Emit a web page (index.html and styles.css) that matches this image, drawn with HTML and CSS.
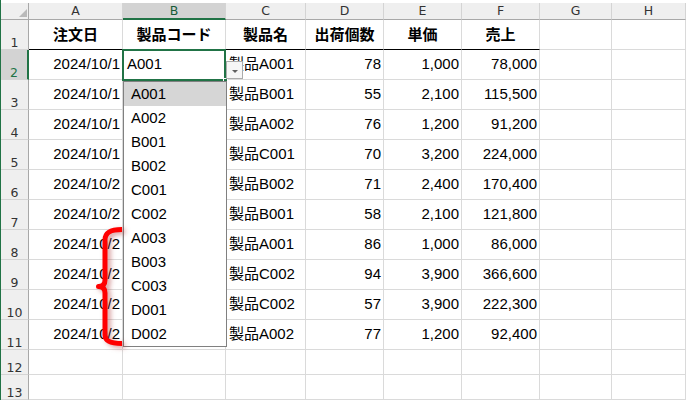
FILE: index.html
```html
<!DOCTYPE html>
<html lang="ja">
<head>
<meta charset="utf-8">
<title>製品コード</title>
<link rel="stylesheet" href="styles.css">
</head>
<body>
<div class="sheet">
  <div class="grid">
    <div class="corner"><span class="tri"></span></div>
    <div class="ch">A</div><div class="ch on">B</div><div class="ch">C</div><div class="ch">D</div><div class="ch">E</div><div class="ch">F</div><div class="ch">G</div><div class="ch">H</div>

    <div class="rh">1</div><div class="c h">注文日</div><div class="c h">製品コード</div><div class="c h">製品名</div><div class="c h">出荷個数</div><div class="c h">単価</div><div class="c h">売上</div><div class="c"></div><div class="c"></div>

    <div class="rh on">2</div><div class="c r">2024/10/1</div><div class="c b">A001</div><div class="c">製品A001</div><div class="c r">78</div><div class="c r">1,000</div><div class="c r">78,000</div><div class="c"></div><div class="c"></div>
    <div class="rh">3</div><div class="c r">2024/10/1</div><div class="c b"></div><div class="c">製品B001</div><div class="c r">55</div><div class="c r">2,100</div><div class="c r">115,500</div><div class="c"></div><div class="c"></div>
    <div class="rh">4</div><div class="c r">2024/10/1</div><div class="c b"></div><div class="c">製品A002</div><div class="c r">76</div><div class="c r">1,200</div><div class="c r">91,200</div><div class="c"></div><div class="c"></div>
    <div class="rh">5</div><div class="c r">2024/10/1</div><div class="c b"></div><div class="c">製品C001</div><div class="c r">70</div><div class="c r">3,200</div><div class="c r">224,000</div><div class="c"></div><div class="c"></div>
    <div class="rh">6</div><div class="c r">2024/10/2</div><div class="c b"></div><div class="c">製品B002</div><div class="c r">71</div><div class="c r">2,400</div><div class="c r">170,400</div><div class="c"></div><div class="c"></div>
    <div class="rh">7</div><div class="c r">2024/10/2</div><div class="c b"></div><div class="c">製品B001</div><div class="c r">58</div><div class="c r">2,100</div><div class="c r">121,800</div><div class="c"></div><div class="c"></div>
    <div class="rh">8</div><div class="c r">2024/10/2</div><div class="c b"></div><div class="c">製品A001</div><div class="c r">86</div><div class="c r">1,000</div><div class="c r">86,000</div><div class="c"></div><div class="c"></div>
    <div class="rh">9</div><div class="c r">2024/10/2</div><div class="c b"></div><div class="c">製品C002</div><div class="c r">94</div><div class="c r">3,900</div><div class="c r">366,600</div><div class="c"></div><div class="c"></div>
    <div class="rh">10</div><div class="c r">2024/10/2</div><div class="c b"></div><div class="c">製品C002</div><div class="c r">57</div><div class="c r">3,900</div><div class="c r">222,300</div><div class="c"></div><div class="c"></div>
    <div class="rh">11</div><div class="c r">2024/10/2</div><div class="c b"></div><div class="c">製品A002</div><div class="c r">77</div><div class="c r">1,200</div><div class="c r">92,400</div><div class="c"></div><div class="c"></div>
    <div class="rh">12</div><div class="c"></div><div class="c"></div><div class="c"></div><div class="c"></div><div class="c"></div><div class="c"></div><div class="c"></div><div class="c"></div>
    <div class="rh">13</div><div class="c"></div><div class="c"></div><div class="c"></div><div class="c"></div><div class="c"></div><div class="c"></div><div class="c"></div><div class="c"></div>
  </div>

  <div class="sel"></div>
  <div class="handle"></div>
  <div class="dd-btn"></div>
  <div class="dd-list">
    <div class="dd-item on">A001</div>
    <div class="dd-item">A002</div>
    <div class="dd-item">B001</div>
    <div class="dd-item">B002</div>
    <div class="dd-item">C001</div>
    <div class="dd-item">C002</div>
    <div class="dd-item">A003</div>
    <div class="dd-item">B003</div>
    <div class="dd-item">C003</div>
    <div class="dd-item">D001</div>
    <div class="dd-item">D002</div>
  </div>

  <svg class="brace" width="40" height="135" viewBox="0 0 40 135">
    <path d="M32 9.5 C21 9.5 15 12 15 20 L15 60 C15 64 13 66.5 8.5 66.5 C13 66.5 15 69 15 73 L15 115 C15 121 20 123.5 32 123.5" fill="none" stroke="#ff0000" stroke-width="5" stroke-linejoin="round"/>
  </svg>
</div>
</body>
</html>
```

FILE: styles.css
```css
* { box-sizing: border-box; }

body {
  margin: 0;
  background: #ffffff;
}

.sheet {
  position: relative;
  width: 686px;
  height: 400px;
  overflow: hidden;
  border-left: 1px solid #217346;
  padding-top: 3px;
  background: #ffffff;
}

.grid {
  display: grid;
  grid-template-columns: 28px 94px 103px 80px 78px 78px 78px 72px 74px;
  grid-template-rows: 17px repeat(11, 30px) 25px 25px;
}

.corner {
  background: #efefef;
  border-right: 1px solid #a8a8a8;
  border-bottom: 1px solid #a8a8a8;
  display: flex;
  justify-content: flex-end;
  align-items: flex-end;
  padding: 0 1px 2px 0;
}

.tri {
  width: 0;
  height: 0;
  border-left: 8px solid transparent;
  border-bottom: 8px solid #b9b9b9;
}

.ch {
  background: #efefef;
  border-right: 1px solid #d4d4d4;
  border-bottom: 1px solid #a8a8a8;
  font: 12.5px/14px "DejaVu Sans", sans-serif;
  color: #333333;
  display: flex;
  align-items: center;
  justify-content: center;
}

.ch.on {
  background: #d3d3d3;
  border-bottom: 2px solid #217346;
  color: #185c37;
}

.rh {
  background: #efefef;
  border-right: 1px solid #a8a8a8;
  border-bottom: 1px solid #d4d4d4;
  font: 12.5px/12px "DejaVu Sans", sans-serif;
  color: #333333;
  display: flex;
  justify-content: center;
  align-items: flex-end;
}

.rh.on {
  background: #d3d3d3;
  border-right: 2px solid #217346;
  color: #217346;
}

.c {
  border-right: 1px solid #dadada;
  border-bottom: 1px solid #dadada;
  font: 15px/18px "Liberation Sans", "Noto Sans CJK JP", sans-serif;
  color: #000000;
  display: flex;
  align-items: center;
  padding: 0 3px 2px 3px;
  white-space: nowrap;
  overflow: hidden;
}

.c.r {
  justify-content: flex-end;
  padding-right: 2px;
}

.c.b {
  padding-left: 4px;
}

.c.h {
  font-family: "Noto Sans CJK JP", sans-serif;
  font-weight: 700;
  justify-content: center;
  border-bottom-color: #000000;
}

.sel {
  position: absolute;
  left: 121px;
  top: 49px;
  width: 104px;
  height: 32px;
  border: 2px solid #217346;
}

.handle {
  position: absolute;
  left: 222px;
  top: 78px;
  width: 5px;
  height: 5px;
  background: #217346;
  border: 1px solid #ffffff;
}

.dd-btn {
  position: absolute;
  left: 225px;
  top: 61px;
  width: 17px;
  height: 18px;
  border: 1px solid #ababab;
  background: #f6f6f6;
  display: flex;
  align-items: center;
  justify-content: center;
}

.dd-btn::after {
  content: "";
  width: 0;
  height: 0;
  margin-top: 2px;
  border-left: 3.5px solid transparent;
  border-right: 3.5px solid transparent;
  border-top: 3.5px solid #606060;
}

.dd-list {
  position: absolute;
  left: 122px;
  top: 81px;
  width: 104px;
  border: 1px solid #808080;
  background: #ffffff;
}

.dd-item {
  height: 24px;
  padding-left: 7px;
  font: 15px/24px "Liberation Sans", sans-serif;
  color: #000000;
}

.dd-item.on {
  background: #d6d6d6;
}

.brace {
  position: absolute;
  left: 89px;
  top: 220px;
  overflow: visible;
  pointer-events: none;
  filter: drop-shadow(3px 2px 2.5px rgba(170, 50, 50, 0.5));
}
```
